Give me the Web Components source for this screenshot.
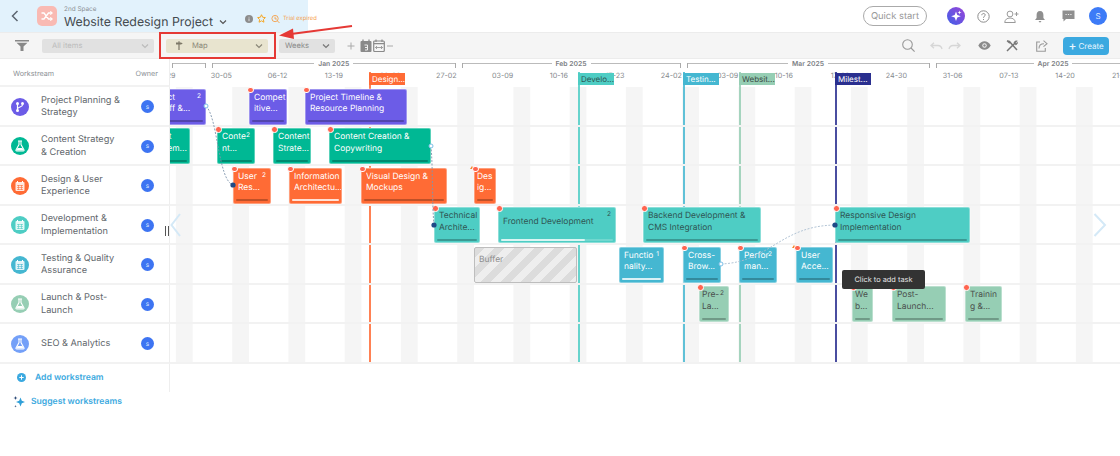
<!DOCTYPE html>
<html lang="en"><head><meta charset="utf-8"><title>Website Redesign Project</title>
<style>
html,body{margin:0;padding:0;background:#fff}
body{font-family:Inter,"Noto Sans",sans-serif;width:1120px;height:456px;overflow:hidden;text-rendering:geometricPrecision}
</style></head><body>
<app-shell>
  <top-bar></top-bar>
  <tool-bar></tool-bar>
  <plan-board>
    <side-panel>
      <work-row icon="branch" color="#6c5ce7">Project Planning &amp;<br>Strategy</work-row>
      <work-row icon="flask" color="#00b894">Content Strategy<br>&amp; Creation</work-row>
      <work-row icon="cal" color="#ff6b35">Design &amp; User<br>Experience</work-row>
      <work-row icon="cal" color="#4ecdc4">Development &amp;<br>Implementation</work-row>
      <work-row icon="cal" color="#45b7d1">Testing &amp; Quality<br>Assurance</work-row>
      <work-row icon="flask" color="#96ceb4">Launch &amp; Post-<br>Launch</work-row>
      <work-row icon="flask" color="#74a0f8">SEO &amp; Analytics</work-row>
    </side-panel>
    <time-line>
      <mile-stone x="369" color="#ff6b35" text="#fff" label="Design..."></mile-stone>
      <mile-stone x="578" color="#4ecdc4" text="#2f5553" label="Develo..."></mile-stone>
      <mile-stone x="683" color="#45b7d1" text="#fff" label="Testin..."></mile-stone>
      <mile-stone x="739" color="#96ceb4" text="#3c4a44" label="Websit..."></mile-stone>
      <mile-stone x="835" color="#2a2f8f" text="#fff" label="Milest..."></mile-stone>
      <lane-row>
        <task-bar x="142" w="64" color="#6c5ce7" badge="2" bar="dark">Project<br>Kickoff &amp;...</task-bar>
        <task-bar x="249" w="38" color="#6c5ce7" bar="dark" dot>Compet<br>itive...</task-bar>
        <task-bar x="305" w="102" color="#6c5ce7" bar="dark" dot>Project Timeline &amp;<br>Resource Planning</task-bar>
      </lane-row>
      <lane-row>
        <task-bar x="135" w="55" color="#00b894" bar="dark">Content<br>Managem...</task-bar>
        <task-bar x="217" w="38" color="#00b894" badge="2" bar="dark" dot>Conte<br>nt...</task-bar>
        <task-bar x="273" w="38" color="#00b894" bar="dark" dot>Content<br>Strate...</task-bar>
        <task-bar x="329" w="102" color="#00b894" bar="dark" dot>Content Creation &amp;<br>Copywriting</task-bar>
      </lane-row>
      <lane-row>
        <task-bar x="233" w="38" color="#ff6b35" badge="2" bar="dark" dot>User<br>Res...</task-bar>
        <task-bar x="289" w="53" color="#ff6b35" bar="light" fill="100" dot>Information<br>Architectu...</task-bar>
        <task-bar x="361" w="86" color="#ff6b35" bar="dark" dot>Visual Design &amp;<br>Mockups</task-bar>
        <task-bar x="474" w="22" color="#ff6b35" bar="dark" dot warn pad="3">Des<br>ig...</task-bar>
      </lane-row>
      <lane-row>
        <task-bar x="434" w="46" color="#4ecdc4" ink="#2f5553" bar="dark" dot>Technical<br>Archite...</task-bar>
        <task-bar x="498" w="118" color="#4ecdc4" ink="#2f5553" badge="2" bar="light" fill="75" dot>Frontend Development</task-bar>
        <task-bar x="643" w="118" color="#4ecdc4" ink="#2f5553" bar="dark" dot>Backend Development &amp;<br>CMS Integration</task-bar>
        <task-bar x="835" w="135" color="#4ecdc4" ink="#2f5553" bar="dark" dot>Responsive Design<br>Implementation</task-bar>
      </lane-row>
      <lane-row>
        <task-bar x="474" w="103" buffer>Buffer</task-bar>
        <task-bar x="619" w="45" color="#45b7d1" badge="1" bar="light" fill="100">Functio<br>nality...</task-bar>
        <task-bar x="683" w="38" color="#45b7d1" bar="dark" dot>Cross-<br>Brow...</task-bar>
        <task-bar x="739" w="38" color="#45b7d1" badge="2" bar="dark" dot>Perfor<br>man...</task-bar>
        <task-bar x="796" w="37" color="#45b7d1" bar="dark" dot warn>User<br>Acce...</task-bar>
      </lane-row>
      <lane-row>
        <task-bar x="699" w="30" color="#96ceb4" ink="#4a4f4c" badge="2" bar="dark" dot pad="3">Pre-<br>La...</task-bar>
        <task-bar x="852" w="21" color="#96ceb4" ink="#4a4f4c" bar="dark" dot warn pad="3">We<br>b...</task-bar>
        <task-bar x="892" w="54" color="#96ceb4" ink="#4a4f4c" bar="dark" dot>Post-<br>Launch...</task-bar>
        <task-bar x="965" w="37" color="#96ceb4" ink="#4a4f4c" bar="dark" dot>Trainin<br>g &amp;...</task-bar>
      </lane-row>
      <lane-row></lane-row>
      <link-lines></link-lines>
      <hint-tip>Click to add task</hint-tip>
      <edge-arrow side="left"></edge-arrow>
      <edge-arrow side="right"></edge-arrow>
    </time-line>
  </plan-board>
  <mark-up></mark-up>
</app-shell>
<script>
function def(name, css, html, init){
  customElements.define(name, class extends HTMLElement{
    connectedCallback(){
      if(this.shadowRoot) return;
      const r=this.attachShadow({mode:'open'});
      const h=typeof html==='function'?html(this):html;
      r.innerHTML='<style>'+(typeof css==='function'?css(this):css)+'</style>'+h;
      if(init) init(this,r);
    }
  });
}
const ic={
 chev:c=>`<svg width="8" height="6" viewBox="0 0 8 6"><path d="M1 1.5 4 4.5 7 1.5" fill="none" stroke="${c}" stroke-width="1.2"/></svg>`
};
def('app-shell',':host{display:flex;flex-direction:column;position:relative;width:1120px;height:456px;overflow:hidden}','<slot></slot>');

def('top-bar',`:host{display:flex;align-items:center;height:32px;box-sizing:border-box;background:linear-gradient(90deg,#e2f2fc 0,#e2f2fc 308px,#fff 308px);color:#444}
.back{margin-left:11px;width:8px;height:12px}
.logo{margin-left:18px;width:20px;height:20px;border-radius:5px;background:#f9bab3;display:flex;align-items:center;justify-content:center}
.tt{margin-left:7px;margin-top:2px;display:flex;flex-direction:column}
.sp{font-size:6.4px;line-height:9px;color:#8b8f93;margin-top:1px}
.ti{font-size:12.35px;line-height:16px;color:#454b50;display:flex;align-items:center;white-space:nowrap}
.ti svg{margin-left:6px}
.mini{display:flex;align-items:center;margin-left:18px;margin-top:5px}
.te{font-size:5.8px;color:#f5a04a;margin-left:2.5px}
.r{margin-left:auto;display:flex;align-items:center;padding-right:13px}
.qs{width:64px;height:20px;box-sizing:border-box;border:1px solid #aaa;border-radius:10px;font-size:9.4px;color:#999;display:flex;align-items:center;justify-content:center;margin-right:20px}
.r svg{display:block}
.av{width:18px;height:18px;border-radius:50%;background:#3d7bf7;color:#dfe9ff;font-size:8px;display:flex;align-items:center;justify-content:center;margin-left:14px}
`,`<svg class="back" viewBox="0 0 8 12"><path d="M6.5 1 1.5 6 6.5 11" fill="none" stroke="#5c6670" stroke-width="1.5"/></svg>
<div class="logo"><svg width="12" height="12" viewBox="0 0 12 12" fill="none" stroke="#fff" stroke-width="1.3"><path d="M.5 3H3L7.5 9H10.5M.5 9H3L7.5 3H10.5"/><path d="M9.3 1.3 11.2 3 9.3 4.7M9.3 7.3 11.2 9 9.3 10.7" stroke-width="1.1"/></svg></div>
<div class="tt"><span class="sp">2nd Space</span><span class="ti">Website Redesign Project<svg width="8" height="6" viewBox="0 0 8 6"><path d="M1 1.5 4 4.5 7 1.5" fill="none" stroke="#555" stroke-width="1.2"/></svg></span></div>
<div class="mini">
<svg width="8" height="8" viewBox="0 0 8 8"><circle cx="4" cy="4" r="4" fill="#8c8c8c"/><path d="M4 3.4V6.2M4 1.8V2.6" stroke="#ddd"/></svg>
<svg style="margin-left:4.5px" width="9" height="9" viewBox="0 0 10 10"><path d="M5 .8 6.3 3.6 9.3 4 7.1 6.1 7.7 9.1 5 7.6 2.3 9.1 2.9 6.1.7 4 3.7 3.6Z" fill="none" stroke="#f5a623" stroke-width="1.1"/></svg>
<svg style="margin-left:5px" width="9" height="10" viewBox="0 0 10 10"><circle cx="4.5" cy="4.5" r="3.5" fill="none" stroke="#f5a04a" stroke-width="1"/><path d="M4.5 2.5V5H6.5M7 7 9.4 9.4" fill="none" stroke="#f5a04a" stroke-width="1"/></svg>
<span class="te">Trial expired</span></div>
<div class="r"><div class="qs">Quick start</div>
<svg width="18" height="18" viewBox="0 0 18 18"><defs><linearGradient id="g" x1="0" y1="1" x2="1" y2="0"><stop offset="0" stop-color="#3f5fe8"/><stop offset="1" stop-color="#9b45d8"/></linearGradient></defs><circle cx="9" cy="9" r="9" fill="url(#g)"/><path d="M9 4.5 10.3 8 13.8 9.3 10.3 10.6 9 14 7.7 10.6 4.2 9.3 7.7 8Z" fill="#fff"/><path d="M12.5 3.5 13 5 14.5 5.5 13 6 12.5 7.5 12 6 10.5 5.5 12 5Z" fill="#fff"/></svg>
<svg style="margin-left:11.5px" width="13" height="13" viewBox="0 0 13 13"><circle cx="6.5" cy="6.5" r="5.7" fill="none" stroke="#8c8c8c" stroke-width="1"/><path d="M4.8 5.2C4.8 3 8.2 3 8.2 5 8.2 6.3 6.5 6.2 6.5 7.8M6.5 9V10" fill="none" stroke="#8c8c8c" stroke-width="1"/></svg>
<svg style="margin-left:14px" width="15" height="13" viewBox="0 0 15 13" fill="none" stroke="#9a9a9a" stroke-width="1"><circle cx="6" cy="4" r="2.9"/><path d="M.7 12.5C1 9.5 3 8 6 8S11 9.500 11.300 12.500H.7Z"/><path d="M12.500 2V6M10.500 4H14.500"/></svg>
<svg style="margin-left:15px" width="12" height="13" viewBox="0 0 12 13"><path d="M6 1C3.500 1 2.600 3 2.600 5V8L1 10H11L9.400 8V5C9.400 3 8.500 1 6 1Z" fill="#8f8f8f"/><path d="M4.500 11H7.500L6 12.800Z" fill="#8f8f8f"/></svg>
<svg style="margin-left:16.5px" width="13" height="12" viewBox="0 0 13 12"><path d="M.5.500H12.500V9H4L1.500 11.500V9H.5Z" fill="#8f8f8f"/><path d="M3.500 4.500H4.700M5.900 4.500H7.100M8.300 4.500H9.500" stroke="#eee" stroke-width="1.1"/></svg>
<div class="av">S</div></div>`);

def('tool-bar',`:host{display:flex;align-items:center;height:27px;box-sizing:border-box;background:#f5f5f5;border-bottom:1px solid #ececec;border-top:1px solid #ececec;color:#888}
.sel{height:14px;border-radius:2px;display:flex;align-items:center;justify-content:space-between;box-sizing:border-box;font-size:7.6px;padding:0 5px 0 10px;flex:none}
svg{display:block;flex:none}
.all{width:112px;background:#e1e1e1;color:#bcbcbc;margin-left:13px}
.map{width:102px;background:#e8e4cf;color:#8a8778;margin-left:12px;padding-left:9px}
.map span{display:flex;align-items:center;gap:9px}
.wk{width:56px;background:#e1e1e1;color:#8a8a8a;margin-left:11px;padding-left:6px}
.r{margin-left:auto;display:flex;align-items:center;padding-right:11px}
.cr{width:46px;height:18px;border-radius:4px;background:#3ba9e0;color:#e8f6ff;font-size:8px;display:flex;align-items:center;justify-content:center;gap:2px;margin-left:15px}
.cr b{font-size:12px;font-weight:500;line-height:10px}
`,`<svg style="margin-left:15px" width="14" height="11" viewBox="0 0 14 11"><path d="M0 0H14V1.500H0ZM1.500 2.800H12.500L8.500 6.500V11H5.500V6.500Z" fill="#888"/></svg>
<div class="sel all">All items ${ic.chev('#bbb')}</div>
<div class="sel map"><span><svg width="8" height="9" viewBox="0 0 8 9"><path d="M1 1.500H6L7.800 2.500 6 3.500H1ZM3.400 .3H4.600V9H3.400Z" fill="#7d7868"/></svg>Map</span>${ic.chev('#8a8778')}</div>
<div class="sel wk">Weeks ${ic.chev('#777')}</div>
<svg style="margin-left:12px" width="8" height="8" viewBox="0 0 8 8"><path d="M4 .5V7.500M.5 4H7.500" stroke="#aaa" stroke-width="1"/></svg>
<svg style="margin-left:5px" width="12" height="13" viewBox="0 0 12 13"><path d="M1.500 2H10.500Q11.500 2 11.500 3V12Q11.500 13 10.500 13H1.500Q.5 13 .5 12V3Q.5 2 1.500 2Z" fill="#8a8a8a"/><path d="M3 .5V3M9 .5V3" stroke="#8a8a8a" stroke-width="1.300"/><path d="M4.500 6H7.500V11H5M7.500 8.500H5" fill="none" stroke="#eee" stroke-width="1"/></svg>
<svg style="margin-left:1px" width="12" height="13" viewBox="0 0 12 13" fill="none" stroke="#8a8a8a"><rect x=".7" y="2" width="10.600" height="10.500" rx="1" stroke-width="1.200"/><path d="M.7 4.700H11.300M3 .5V3M9 .5V3" stroke-width="1.200"/><path d="M2.500 8.500H9.500M4 7 2.500 8.500 4 10M8 7 9.500 8.500 8 10" stroke-width=".8"/></svg>
<svg style="margin-left:2px" width="6" height="2" viewBox="0 0 6 2"><path d="M0 1H6" stroke="#aaa"/></svg>
<div class="r">
<svg width="13" height="13" viewBox="0 0 13 13" fill="none" stroke="#999" stroke-width="1.100"><circle cx="5.500" cy="5.500" r="4.800"/><path d="M9 9 12.600 12.600"/></svg>
<svg style="margin-left:15px" width="13" height="8" viewBox="0 0 13 8" fill="none" stroke="#d6d6d6" stroke-width="1.300"><path d="M4 .7 1 3.500 4 6.200M1 3.500H8C10.500 3.500 11.500 5 12 7"/></svg>
<svg style="margin-left:5px" width="13" height="8" viewBox="0 0 13 8" fill="none" stroke="#d6d6d6" stroke-width="1.300"><path d="M9 .7 12 3.500 9 6.200M12 3.500H5C2.500 3.500 1.500 5 1 7"/></svg>
<svg style="margin-left:17px" width="13" height="9" viewBox="0 0 13 9"><path d="M.3 4.500C2 1.500 4.200.3 6.500.3S11 1.500 12.700 4.500C11 7.500 8.800 8.700 6.500 8.700S2 7.500.3 4.500Z" fill="#8a8a8a"/><circle cx="6.500" cy="4.500" r="2.200" fill="#f2f2f2"/><circle cx="6.500" cy="4.500" r="1.200" fill="#8a8a8a"/></svg>
<svg style="margin-left:15px" width="12" height="12" viewBox="0 0 12 12" fill="none" stroke="#777" stroke-width="1.500"><path d="M1 11 8 4M3 1 11 10"/><path d="M7.800 3.500C7.800 1.700 9.500.3 11.300 1L9.500 2.700 10 3.500 11.600 2.200C11.800 4.200 10 5.200 8.500 4.600" fill="#777" stroke-width=".5"/><path d="M1.200 .5 4 3" stroke-width="1.800"/></svg>
<svg style="margin-left:18px" width="12" height="12" viewBox="0 0 12 12" fill="none" stroke="#9a9a9a" stroke-width="1.100"><path d="M4 2H.7V11.300H9.300V8"/><path d="M3 8.500C3 5.500 5 3.700 8 3.700M7.500 .7 11 3.700 7.500 6.700" /></svg>
<div class="cr"><b>+</b>Create</div></div>`);

def('plan-board',':host{display:flex;align-items:flex-start}','<slot></slot>');

def('side-panel',`:host{display:flex;flex-direction:column;width:170px;flex:none;font-size:9px}
.h{height:28px;display:flex;justify-content:space-between;align-items:center;box-sizing:border-box;padding:2px 11px 0 13px;color:#8a8f94;font-size:7.2px;border-right:1px solid #eee;border-bottom:2px solid #f2f2f2}
.add{height:28px;box-sizing:border-box;display:flex;align-items:center;padding-left:17px;gap:9px;border-right:1px solid #eee;font-weight:600;color:#3ba9e0;font-size:8.6px}
.sug{height:20px;display:flex;align-items:center;padding-left:13px;gap:5px;font-weight:600;color:#3ba9e0;font-size:8.6px}
svg{display:block}
.grip{position:absolute;left:165px;top:226px;width:4px;height:10px;border-left:1px solid #555;border-right:1px solid #555;box-sizing:border-box;z-index:5}
`,`<div class="h"><span>Workstream</span><span>Owner</span></div><slot></slot>
<div class="add"><svg width="9" height="9" viewBox="0 0 9 9"><circle cx="4.500" cy="4.500" r="4.500" fill="#3ba9e0"/><path d="M4.500 2.300V6.700M2.300 4.500H6.700" stroke="#fff"/></svg>Add workstream</div>
<div class="sug"><svg width="13" height="13" viewBox="0 0 13 13"><path d="M7.500 2.500 8.800 5.700 12 7 8.800 8.300 7.500 11.500 6.200 8.300 3 7 6.200 5.700Z" fill="#2f9fd8"/><path d="M2.500 1 3 2.500 4.500 3 3 3.500 2.500 5 2 3.500.5 3 2 2.500ZM2.500 10 2.800 11 3.800 11.300 2.800 11.600 2.500 12.600 2.200 11.600 1.200 11.300 2.200 11Z" fill="#1f3f6f"/></svg>Suggest workstreams</div>
<i class="grip"></i>`);

const wi={
 branch:'<circle cx="3.500" cy="2.500" r="1.500" fill="#fff"/><circle cx="3.500" cy="9.500" r="1.500" fill="#fff"/><circle cx="8.500" cy="2.500" r="1.500" fill="#fff"/><path d="M3.500 3V9M8.500 4C8.500 6 3.500 6 3.500 8" fill="none" stroke="#fff" stroke-width="1.200"/>',
 flask:'<path d="M4 1H8M5 1V4.500L2 10Q1.700 11 2.700 11H9.300Q10.300 11 10 10L7 4.500V1" fill="none" stroke="#fff" stroke-width="1.100"/><path d="M3.500 8H8.500L9.500 10.500H2.500Z" fill="#fff"/>',
 cal:'<rect x="1.500" y="2" width="9" height="9" rx="1" fill="#fff" opacity=".85"/><path d="M3.500 1V3M8.500 1V3" stroke="#fff"/><path d="M3 5.500H9M3 7.500H9M3 9.500H9M4.500 5V10M7.500 5V10" stroke-opacity=".8" stroke="currentColor" stroke-width=".7"/>'
};
def('work-row',`:host{display:flex;align-items:center;height:39.5px;box-sizing:border-box;padding-top:3px;border-bottom:2px solid #f2f2f2;border-right:1px solid #eee;background:#fff;font-size:9.2px;line-height:12.400px;color:#62676c;padding-left:11px}
.ic{width:18px;height:18px;border-radius:50%;display:flex;align-items:center;justify-content:center;flex:none;margin-top:-1px}
.t{margin-left:12px;flex:1;white-space:nowrap}
.s{width:13px;height:13px;border-radius:50%;background:#3d74f2;color:#dfe9ff;font-size:6.500px;display:flex;align-items:center;justify-content:center;flex:none;margin-right:15px;margin-top:-1px}
`,h=>{const c=h.getAttribute('color');return `<div class="ic" style="background:${c};color:${c}"><svg width="12" height="12" viewBox="0 0 12 12">${wi[h.getAttribute('icon')]}</svg></div><div class="t"><slot></slot></div><div class="s">s</div>`});

def('time-line',`:host{display:block;position:relative;flex:none;width:950px;height:305px;overflow:hidden}
.mo{display:flex;height:12px;padding:4px 0 0 2px;box-sizing:border-box;gap:6px}
.we{display:flex;height:9px;margin-left:-33px;font-size:7.2px;color:#85898d;align-items:center}
.we span{flex:none;width:56.250px;text-align:center}
.body{background:linear-gradient(90deg,transparent 6px,#f5f5f5 6px,#f5f5f5 22.750px,transparent 22.750px) 0 0/56.250px 100% repeat-x;height:276.500px;margin-top:7px}
`,()=>{
 const w=['23-29','30-05','06-12','13-19','20-26','27-02','03-09','10-16','17-23','24-02','03-09','10-16','17-23','24-30','31-06','07-13','14-20','21-27'];
 return `<div class="mo"><month-span w="34"></month-span><month-span w="243.500" label="Jan 2025"></month-span><month-span w="219" label="Feb 2025"></month-span><month-span w="243" label="Mar 2025"></month-span><month-span w="234" label="Apr 2025" open></month-span></div>
 <div class="we">${w.map(x=>`<span>${x}</span>`).join('')}</div>
 <div class="body"><slot></slot></div>`});

def('month-span',h=>`:host{display:flex;flex:none;width:${h.getAttribute('w')}px;height:5px;box-sizing:border-box;border-left:1px solid #aaa;border-right:${h.hasAttribute('open')?0:'1px solid #aaa'};align-items:flex-start;font-size:6.8px;font-weight:600;color:#7d8185;line-height:9px}
i{flex:1;border-top:1.500px solid #bbb}
span{margin-top:-4px;padding:0 4px;white-space:nowrap}`,h=>{const l=h.getAttribute('label');return l?`<i></i><span>${l}</span><i></i>`:'<i></i>'});

def('lane-row',`:host{display:block;position:relative;height:39.500px;box-sizing:border-box;border-bottom:2px solid #f2f2f2;z-index:2}`,'<slot></slot>');

def('task-bar',h=>{
 const x=+h.getAttribute('x')-170,w=+h.getAttribute('w'),c=h.getAttribute('color'),ink=h.getAttribute('ink')||'#fff',pad=h.getAttribute('pad')||5;
 const buf=h.hasAttribute('buffer');
 return `:host{position:absolute;left:${x}px;top:1.500px;width:${w}px;height:36px;box-sizing:border-box;border-radius:2px;border:1px solid ${buf?'#bdbdbd':'rgba(255,255,255,.35)'};
 background:${buf?'repeating-linear-gradient(135deg,#dcdcdc 0 7px,#eeeeee 7px 14px)':c};color:${buf?'#8d8d8d':ink};font-size:8.45px;line-height:11.600px;box-shadow:0 0 0 .5px ${buf?'transparent':'rgba(255,255,255,.5)'}}
 .t{position:absolute;left:${pad-1}px;top:${buf?7:3}px;right:0;height:24px;overflow:hidden;white-space:nowrap;display:flex;align-items:${!buf&&!h.querySelector('br')?'center':'flex-start'}}
 .b{position:absolute;right:4px;top:2px;font-size:6.500px;line-height:8px;color:${ink}}
 .p{position:absolute;left:2px;right:2px;bottom:1.500px;height:2px;border-radius:1px;background:rgba(0,0,0,.25)}
 .p.l{background:rgba(255,255,255,.2)}
 .p.l i{display:block;height:100%;background:rgba(255,255,255,.75);border-radius:1px}
 .d{position:absolute;left:-3px;top:-3px;width:4.500px;height:4.500px;border-radius:50%;background:#ff6550;border:1px solid #fff;box-sizing:content-box}
 .w{position:absolute;left:-5px;top:-3px;width:0;height:0;border:2px solid transparent;border-top:0;border-bottom:3.500px solid #f5862a;}`},
 h=>{
  const bar=h.getAttribute('bar'),fill=h.getAttribute('fill')||100,badge=h.getAttribute('badge');
  return `<div class="t"><div><slot></slot></div></div>${badge?`<span class="b">${badge}</span>`:''}${bar==='dark'?'<div class="p"></div>':bar==='light'?`<div class="p l"><i style="width:${fill}%"></i></div>`:''}${h.hasAttribute('warn')?'<i class="w"></i>':''}${h.hasAttribute('dot')?'<i class="d"></i>':''}`});

def('mile-stone',h=>{const x=+h.getAttribute('x')-170,c=h.getAttribute('color');
 return `:host{position:absolute;left:${x}px;top:13px;width:2px;height:292px;z-index:1}
 .l{position:absolute;inset:0;background:${c};opacity:.85}
 .f{position:absolute;left:0;top:1px;width:36px;height:12px;background:${c};color:${h.getAttribute('text')};font-size:8px;line-height:12px;padding-left:3px;box-sizing:border-box;white-space:nowrap;overflow:hidden}`},
 h=>`<div class="l"></div><div class="f">${h.getAttribute('label')}</div>`);

def('link-lines',':host{position:absolute;left:0;top:0;width:950px;height:305px;z-index:3;pointer-events:none}svg{display:block}',
`<svg width="950" height="305" viewBox="170 59 950 305" fill="none">
<g stroke="#7f95ad" stroke-width=".9" stroke-dasharray="2 1.500">
<path d="M206 106C218 118 218 180 233 185"/>
<path d="M431 146C433 170 432 205 434 225"/>
<path d="M721 264C770 262 780 226 835 225" stroke="#a9bdd0"/>
</g>
<g><circle cx="206" cy="106" r="2" fill="#fff" stroke="#7cc0e8"/><circle cx="431" cy="146" r="2" fill="#fff" stroke="#7cc0e8"/><circle cx="721" cy="264" r="2" fill="#fff" stroke="#7cc0e8"/>
<circle cx="233" cy="185" r="2.600" fill="#1f4a86"/><circle cx="434" cy="225" r="2.600" fill="#1f4a86"/><circle cx="835" cy="225" r="2.600" fill="#1f4a86"/></g></svg>`);

def('hint-tip',`:host{position:absolute;left:672px;top:211px;width:83px;height:19px;border-radius:2px;background:#333;color:#e6e6e6;font-size:7.4px;display:flex;align-items:center;justify-content:center;z-index:4}`,'<slot></slot>');

def('edge-arrow',h=>`:host{position:absolute;${h.getAttribute('side')==='left'?'left:0;top:154px':'left:923px;top:154px'};z-index:3}svg{display:block}`,
 h=>h.getAttribute('side')==='left'
 ?'<svg width="11" height="24" viewBox="0 0 11 24"><path d="M10 1 1.500 12 10 23" fill="none" stroke="#d4e9f7" stroke-width="2"/></svg>'
 :'<svg width="14" height="24" viewBox="0 0 14 24"><path d="M1.500 1 12 12 1.500 23" fill="none" stroke="#d4e9f7" stroke-width="2"/></svg>');

def('mark-up',':host{position:absolute;left:0;top:0;z-index:9}.b{position:absolute;left:159px;top:32px;width:117px;height:27px;box-sizing:border-box;border:2px solid #e53935}svg{position:absolute;left:276px;top:20px;display:block}',
`<div class="b"></div><svg width="80" height="24" viewBox="0 0 80 24"><path d="M76 6 15 14" stroke="#e53935" stroke-width="2"/><path d="M3 15.500 17 8.500 18 19Z" fill="#e53935"/></svg>`);
</script>
</body></html>
